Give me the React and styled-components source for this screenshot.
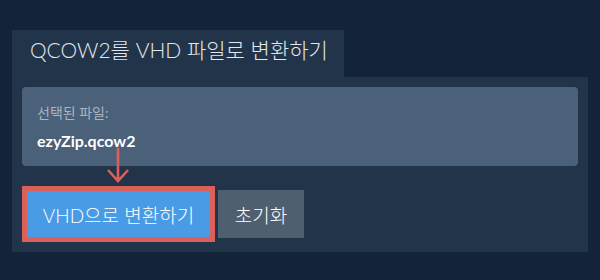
import React from 'react';
import styled, { createGlobalStyle } from 'styled-components';

const GlobalStyle = createGlobalStyle`
  html, body {
    margin: 0;
    padding: 0;
    background: #12233a;
  }
  body {
    font-family: Lato, "Noto Sans CJK KR", sans-serif;
  }
`;

const Page = styled.div`
  width: 600px;
  height: 280px;
  padding: 30px 12px 0 12px;
  box-sizing: border-box;
`;

const Tab = styled.div`
  display: block;
  background: #223449;
  color: #e3e8ee;
  font-size: 21px;
  font-weight: 300;
  height: 47px;
  line-height: 40px;
  padding: 0 0 0 18px;
  box-sizing: border-box;
  width: 332px;
  white-space: nowrap;
  overflow: hidden;
`;

const Panel = styled.div`
  background: #223449;
  padding: 10px 10px 10px 10px;
  height: 175px;
  box-sizing: border-box;
`;

const FileBox = styled.div`
  background: #4b6079;
  border-radius: 4px;
  height: 79px;
  padding: 16px 15px 0 15px;
  box-sizing: border-box;
  position: relative;
`;

const Label = styled.div`
  color: #a9b4c2;
  font-size: 14px;
  line-height: 20px;
`;

const FileName = styled.div`
  color: #ffffff;
  font-size: 16px;
  font-weight: 700;
  line-height: 20px;
  margin-top: 8px;
`;

const Arrow = styled.svg`
  position: absolute;
  left: 85px;
  top: 61px;
`;

const Actions = styled.div`
  display: flex;
  align-items: center;
  gap: 3px;
  margin-top: 20px;
`;

const Highlight = styled.div`
  border: 5px solid #dc605a;
  display: flex;
`;

const Button = styled.button`
  border: none;
  margin: 0;
  font-family: Lato, "Noto Sans CJK KR", sans-serif;
  font-size: 19px;
  font-weight: 300;
  color: #ffffff;
  background: ${p => (p.$primary ? '#4a9be6' : '#4f5f70')};
  height: ${p => (p.$primary ? '46px' : '48px')};
  padding: 0;
  width: ${p => (p.$primary ? '183px' : '86px')};
  cursor: pointer;
`;

export default function App() {
  return (
    <Page>
      <GlobalStyle />
      <Tab>QCOW2를 VHD 파일로 변환하기</Tab>
      <Panel>
        <FileBox>
          <Label>선택된 파일:</Label>
          <FileName>ezyZip.qcow2</FileName>
          <Arrow width="26" height="36" viewBox="0 0 26 36">
            <path
              d="M11 0 V33 M1 22 L11 33 L21 22"
              fill="none"
              stroke="#dc605a"
              strokeWidth="2.6"
            />
          </Arrow>
        </FileBox>
        <Actions>
          <Highlight>
            <Button $primary>VHD으로 변환하기</Button>
          </Highlight>
          <Button>초기화</Button>
        </Actions>
      </Panel>
    </Page>
  );
}
